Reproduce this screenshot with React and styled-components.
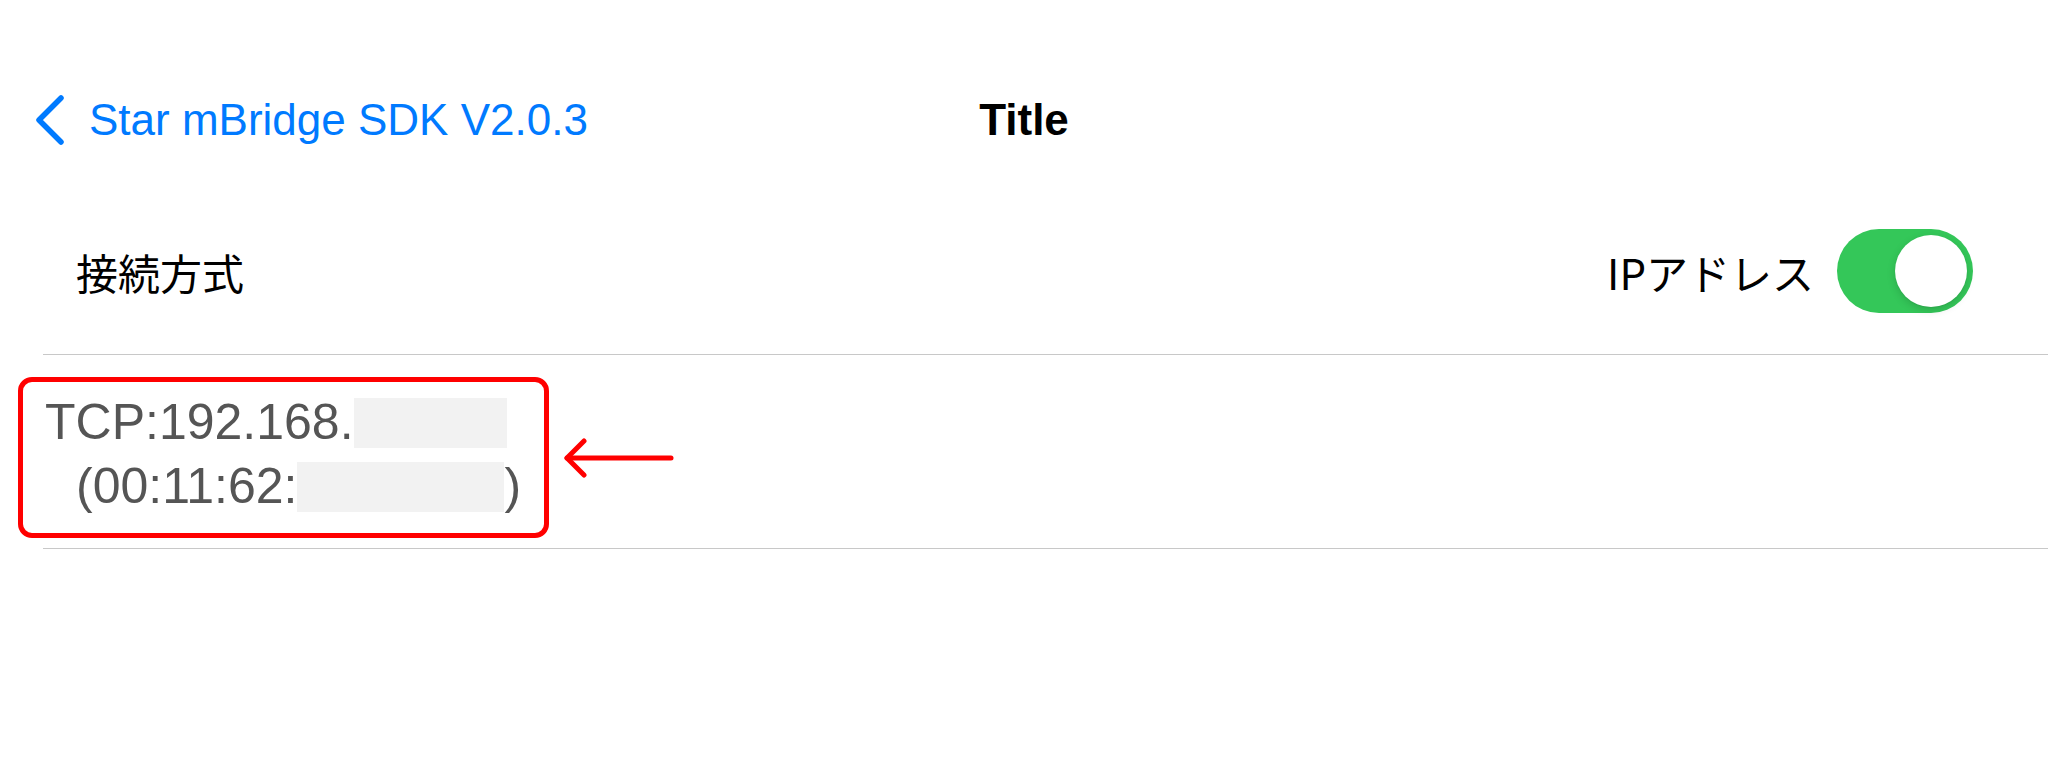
import styled, { createGlobalStyle } from "styled-components";

const GlobalStyle = createGlobalStyle`
    body {
        margin: 0;
        background: #fff;
        font-family: "Liberation Sans", "Noto Sans CJK JP", sans-serif;
    }
`;

const Page = styled.div`
    width: 2048px;
    height: 768px;
    background: #fff;
    overflow: hidden;
`;

const NavBar = styled.div`
    display: grid;
    grid-template-columns: 1fr auto 1fr;
    align-items: center;
    height: 136px;
    padding-top: 52px;
`;

const BackButton = styled.div`
    display: flex;
    align-items: center;
    gap: 24px;
    padding-left: 35px;
    color: #007aff;
    font-size: 44px;
`;

const NavTitle = styled.span`
    font-size: 44px;
    font-weight: 700;
    color: #000;
`;

const SettingRow = styled.div`
    display: flex;
    align-items: center;
    justify-content: space-between;
    height: 166px;
    padding: 0 75px 0 76px;
`;

const Label = styled.span`
    font-family: "Noto Sans CJK JP", sans-serif;
    font-size: 42px;
    color: #000;
`;

const Trailing = styled.div`
    display: flex;
    align-items: center;
    gap: 23px;
`;

const Switch = styled.div`
    display: flex;
    align-items: center;
    justify-content: ${(p) => (p.$on ? "flex-end" : "flex-start")};
    width: 136px;
    height: 84px;
    padding: 0 6px;
    box-sizing: border-box;
    border-radius: 42px;
    background: ${(p) => (p.$on ? "#34c759" : "#e9e9ea")};
`;

const Knob = styled.div`
    width: 72px;
    height: 72px;
    border-radius: 50%;
    background: #fff;
    box-shadow: 0 3px 8px rgba(0, 0, 0, 0.15), 0 1px 1px rgba(0, 0, 0, 0.06);
`;

const Divider = styled.div`
    height: 1px;
    margin-left: 43px;
    background: #c8c8c8;
`;

const DeviceRow = styled.div`
    display: flex;
    align-items: center;
    gap: 14px;
    padding: 22px 0 10px 18px;
`;

const Highlight = styled.div`
    border: 5px solid #ff0000;
    border-radius: 14px;
    padding: 8px 23px 15px 22px;
`;

const DeviceLine = styled.div`
    font-size: 50px;
    line-height: 64px;
    color: #555;
    white-space: nowrap;
    padding-left: ${(p) => p.$indent || 0}px;
`;

const Redacted = styled.span`
    display: inline-block;
    vertical-align: top;
    margin-top: 8px;
    height: 50px;
    width: ${(p) => p.$w}px;
    background: #f2f2f2;
`;

const ChevronLeft = () => (
    <svg width="30" height="50" viewBox="0 0 30 50">
        <polyline
            points="26,3 4,25 26,47"
            fill="none"
            stroke="#007aff"
            strokeWidth="5.5"
            strokeLinecap="round"
            strokeLinejoin="round"
        />
    </svg>
);

const ArrowLeft = () => (
    <svg width="112" height="40" viewBox="0 0 112 40">
        <g fill="none" stroke="#ff0000" strokeWidth="5" strokeLinecap="round" strokeLinejoin="round">
            <line x1="4" y1="20" x2="108" y2="20" />
            <polyline points="21,3 4,20 21,37" />
        </g>
    </svg>
);

export default function App() {
    return (
        <Page>
            <GlobalStyle />
            <NavBar>
                <BackButton>
                    <ChevronLeft />
                    <span>Star mBridge SDK V2.0.3</span>
                </BackButton>
                <NavTitle>Title</NavTitle>
                <div />
            </NavBar>
            <SettingRow>
                <Label>接続方式</Label>
                <Trailing>
                    <Label>IPアドレス</Label>
                    <Switch $on>
                        <Knob />
                    </Switch>
                </Trailing>
            </SettingRow>
            <Divider />
            <DeviceRow>
                <Highlight>
                    <DeviceLine>
                        TCP:192.168.<Redacted $w={153} />
                    </DeviceLine>
                    <DeviceLine $indent={31}>
                        (00:11:62:<Redacted $w={207} />)
                    </DeviceLine>
                </Highlight>
                <ArrowLeft />
            </DeviceRow>
            <Divider />
        </Page>
    );
}
